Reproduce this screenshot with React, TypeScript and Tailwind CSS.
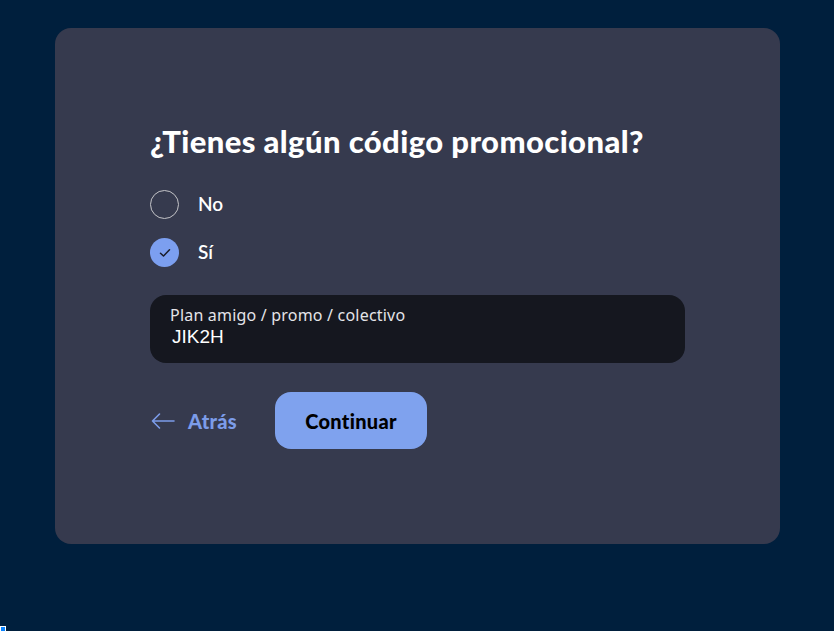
import React from "react";

export default function App() {
  return (
    <div className="w-[834px] h-[631px] bg-[#001f3d] relative overflow-hidden" style={{ fontFamily: "Lato, 'Noto Sans', sans-serif" }}>
      <div className="pt-[28px] pl-[55px]">
        <div className="w-[725px] h-[516px] bg-[#363a4e] rounded-[16px] pt-[94px] pl-[95px] pr-[60px] flex flex-col">
          <h1 className="text-[31px] leading-[38px] font-black text-white tracking-[0.4px] whitespace-nowrap">¿Tienes algún código promocional?</h1>
          <div className="mt-[30px] flex flex-col gap-[19px]">
            <label className="flex items-center h-[29px]">
              <span className="w-[29px] h-[29px] rounded-full border-[1.5px] border-[#c4c4c8]" />
              <span className="ml-[19px] text-[19px] font-semibold text-white">No</span>
            </label>
            <label className="flex items-center h-[29px]">
              <span className="w-[29px] h-[29px] rounded-full bg-[#7c9ff0] flex items-center justify-center">
                <svg width="12" height="10" viewBox="0 0 12 10" fill="none">
                  <path d="M1.5 5.2 L4.5 8 L10.5 1.8" stroke="#1a1d2a" strokeWidth="1.5" strokeLinecap="round" strokeLinejoin="round" />
                </svg>
              </span>
              <span className="ml-[19px] text-[19px] font-semibold text-white">Sí</span>
            </label>
          </div>
          <div className="mt-[28px] w-[535px] h-[68px] bg-[#15171f] rounded-[16px] pl-[20px] pt-[10px] flex flex-col">
            <span className="text-[16px] leading-[20px] text-[#e4e4e8] tracking-[0.2px]" style={{ fontFamily: "'Noto Sans', sans-serif" }}>Plan amigo / promo / colectivo</span>
            <span className="ml-[2px] text-[19px] leading-[24px] text-white" style={{ fontFamily: "'Liberation Sans', Arial, sans-serif" }}>JIK2H</span>
          </div>
          <div className="mt-[29px] flex items-center">
            <button className="flex items-center text-[#7c9ce9] text-[20px] font-black">
              <svg width="26" height="18" viewBox="0 0 26 18" fill="none" className="mr-[12px]">
                <path d="M24 9 H2.5 M9.5 2 L2.5 9 L9.5 16" stroke="#7c9ce9" strokeWidth="1.6" strokeLinecap="round" strokeLinejoin="round" />
              </svg>
              <span className="tracking-[0.3px]">Atrás</span>
            </button>
            <button className="ml-[38px] w-[152px] h-[57px] rounded-[16px] bg-[#7fa2ee] text-black text-[20px] font-black tracking-[0.3px]">Continuar</button>
          </div>
        </div>
      </div>
      <div className="absolute left-0 top-[626px] w-[6px] h-[6px] bg-[#0a84ff] border border-white" />
    </div>
  );
}
